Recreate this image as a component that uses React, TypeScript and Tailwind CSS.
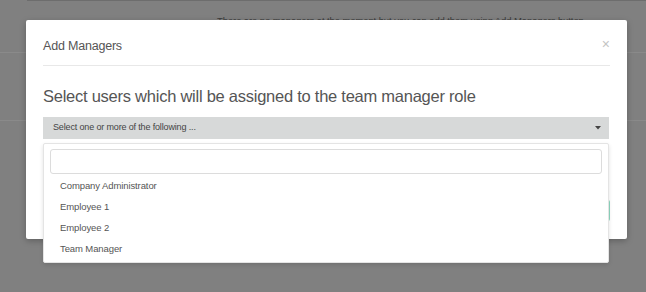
const users = ["Company Administrator", "Employee 1", "Employee 2", "Team Manager"];

function Caret() {
  return (
    <svg width="6" height="4" viewBox="0 0 6 4" className="shrink-0">
      <path d="M0 0h6L3 3.5z" fill="#444" />
    </svg>
  );
}

export default function App() {
  return (
    <div className="relative h-[292px] w-[646px] overflow-hidden bg-[#808080] font-['Liberation_Sans',Arial,sans-serif]">
      {/* page behind the backdrop */}
      <div className="ml-[27px] h-px bg-[#6d6d6d]" />
      <div className="h-[52px] border-b border-[#8a8a8a] pl-[217px] pt-[13px] text-[9.5px] tracking-[-0.1px] text-[#3c3c3c]">
        There are no managers at the moment but you can add them using Add Managers button.
      </div>
      <div className="h-[68px] border-b border-[#8a8a8a]" />

      {/* modal */}
      <div className="absolute left-[26px] top-[20px] w-[601px] rounded-[2px] bg-white px-[17px] shadow-[0_2px_6px_rgba(0,0,0,0.25)]">
        <div className="flex items-center justify-between border-b border-[#e8e8e8] pb-[9px] pt-[16px]">
          <h4 className="text-[12.5px] leading-[20px] tracking-[-0.2px] text-[#555]">Add Managers</h4>
          <span className="-mt-[5px] text-[14px] leading-[20px] text-[#c4c4c4]">×</span>
        </div>

        <div className="pt-[19px]">
          <h3 className="text-[16.5px] leading-[22px] tracking-[-0.25px] text-[#555]">
            Select users which will be assigned to the team manager role
          </h3>

          <div className="relative mr-px mt-[10px]">
            <div className="flex h-[22px] items-center justify-between bg-[#d7d9d9] pl-[10px] pr-[8px] text-[9px] tracking-[-0.15px] text-[#444]">
              <span>Select one or more of the following ...</span>
              <Caret />
            </div>

            <div className="absolute left-0 right-0 top-[26px] z-10 rounded-[2px] border border-[#e4e4e4] bg-white px-[6px] pb-[2px] pt-[5px] shadow-[0_2px_4px_rgba(0,0,0,0.12)]">
              <div className="h-[25px] rounded-[3px] border border-[#dcdcdc] bg-white" />
              <ul className="mt-[2px]">
                {users.map((u) => (
                  <li key={u} className="flex h-[21px] items-center pl-[10px] text-[9.5px] tracking-[-0.1px] text-[#555]">
                    {u}
                  </li>
                ))}
              </ul>
            </div>
          </div>
        </div>

        <div className="flex justify-end pb-[18px] pt-[61px]">
          <button className="h-[21px] w-[70px] rounded-[2px] bg-[#8fd8c0]" />
        </div>
      </div>
    </div>
  );
}
